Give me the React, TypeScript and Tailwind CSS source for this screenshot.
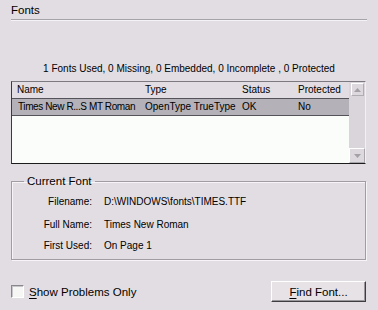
import React from "react";

function UpArrow() {
  return (
    <svg width="7" height="4" viewBox="0 0 7 4">
      <polygon points="0,4 7,4 3.5,0" fill="#a4a0a8" />
    </svg>
  );
}
function DownArrow() {
  return (
    <svg width="7" height="4" viewBox="0 0 7 4">
      <polygon points="0,0 7,0 3.5,4" fill="#a4a0a8" />
    </svg>
  );
}

export default function App() {
  const small = "text-[10px] leading-[12px]";
  return (
    <div
      className="w-[378px] h-[310px] bg-[#e2dde2] text-black px-[11px] pt-[3px] overflow-hidden"
      style={{ fontFamily: '"Liberation Sans", Arial, sans-serif' }}
    >
      {/* Title */}
      <div className="text-[11.5px] leading-[14px]">Fonts</div>
      <div className="mt-[2px] h-px bg-[#a6a3a8]" />
      <div className="h-px bg-[#f4f2f4]" />

      {/* Summary */}
      <div className={`mt-[42px] text-center ${small} -mx-[11px]`}>
        1 Fonts Used, 0 Missing, 0 Embedded, 0 Incomplete , 0 Protected
      </div>

      {/* Table */}
      <div className="mt-[6px] w-[355px] h-[83px] flex border border-t-[#7c7a80] border-l-[#3c3a40] border-b-[#1c1c1c] border-r-[#f2f0f2]">
        <div className="flex-1 flex flex-col">
          <div className={`h-[16px] grid grid-cols-[128px_97px_56px_1fr] items-center pl-[5px] ${small}`}>
            <span>Name</span>
            <span>Type</span>
            <span>Status</span>
            <span>Protected</span>
          </div>
          <div className={`h-[18px] grid grid-cols-[128px_97px_56px_1fr] items-center pl-[6px] bg-[#b4b2b8] border-y border-[#55535a] ${small}`}>
            <span className="tracking-[-0.4px] whitespace-nowrap">Times New R...S MT Roman</span>
            <span className="-ml-px whitespace-nowrap">OpenType TrueType</span>
            <span className="-ml-px">OK</span>
            <span className="-ml-px">No</span>
          </div>
          <div className="flex-1 bg-[#fbfdfb] border-b border-[#1c1c1c] -mb-px" />
        </div>
        <div className="w-[16px] bg-[#d9d5da] flex flex-col justify-between items-center pt-px">
          <div className="w-[13px] h-[13px] bg-[#dcd8dd] border border-t-white border-l-white border-b-[#b0adb2] border-r-[#b0adb2] flex items-center justify-center">
            <UpArrow />
          </div>
          <div className="w-[16px] h-[15px] bg-[#dcd8dd] border border-t-white border-l-white border-b-[#a9a6ab] border-r-[#a9a6ab] flex items-center justify-center">
            <DownArrow />
          </div>
        </div>
      </div>

      {/* Current Font group */}
      <fieldset className="mt-[10px] w-[355px] border border-[#a09ca2] px-0 pb-[7px] shadow-[1px_1px_0_#f6f4f6,inset_1px_1px_0_#f6f4f6]">
        <legend className="ml-[12px] px-[3px] text-[11.5px] leading-[14px]">Current Font</legend>
        <div className={`grid grid-cols-[80px_1fr] gap-x-[12px] ${small}`}>
          <span className="text-right mt-[8px]">Filename:</span>
          <span className="mt-[8px]">D:\WINDOWS\fonts\TIMES.TTF</span>
          <span className="text-right mt-[11px]">Full Name:</span>
          <span className="mt-[11px]">Times New Roman</span>
          <span className="text-right mt-[9px]">First Used:</span>
          <span className="mt-[9px]">On Page 1</span>
        </div>
      </fieldset>

      {/* Bottom row */}
      <div className="mt-[21px] w-[355px] flex items-center justify-between">
        <label className="flex items-center">
          <span className="w-[13px] h-[13px] bg-[#f6f6f4] border border-t-[#8a878c] border-l-[#8a878c] border-b-white border-r-white shadow-[inset_1px_1px_0_#c8c6ca]" />
          <span className="ml-[5px] text-[11.5px] leading-[14px]">
            <span className="underline underline-offset-2">S</span>how Problems Only
          </span>
        </label>
        <div className="w-[95px] h-[21px] bg-[#e6e2e6] border border-t-white border-l-white border-b-[#3e3c40] border-r-[#3e3c40] shadow-[inset_-1px_-1px_0_#9a979c] flex items-center justify-center text-[11.5px] leading-[14px]">
          <span>
            <span className="underline underline-offset-2">F</span>ind Font...
          </span>
        </div>
      </div>
    </div>
  );
}
